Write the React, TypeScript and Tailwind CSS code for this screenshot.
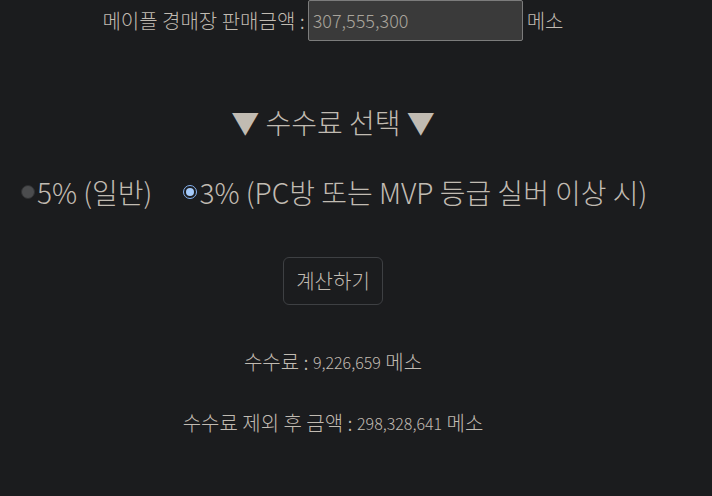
import React from "react";

const font = { fontFamily: '"Noto Sans CJK KR", "Noto Sans", sans-serif' };

export default function App() {
  return (
    <div className="w-[712px] h-[496px] bg-[#1b1c1e] text-[#c1bbb2] overflow-hidden" style={font}>
      <div className="w-[666px] flex flex-col">
        <div className="flex items-center justify-center h-[41px] text-[20px] font-light">
          <span>메이플 경매장 판매금액 :</span>
          <div className="ml-[3px] w-[215px] h-[41px] shrink-0 bg-[#3a3a3a] border border-[#7c7c7c] rounded-[2px] flex items-center pl-[4px] text-[18px] text-[#a9a49c]">
            307,555,300
          </div>
          <span className="ml-[4px]">메소</span>
        </div>
        <div className="mt-[61px] h-[40px] flex items-center justify-center text-[28px] font-light">
          ▼ 수수료 선택 ▼
        </div>
        <div className="mt-[30px] h-[40px] flex items-center pl-[21px] text-[28px] font-light w-[712px] whitespace-nowrap">
          <span className="shrink-0 w-[14px] h-[14px] rounded-full bg-[#4b4c4e] border border-[#2f3032] mr-[2px]" />
          <span>5% (일반)</span>
          <span className="shrink-0 ml-[31px] w-[14px] h-[14px] rounded-full border-[1.5px] border-[#86b3f2] bg-[#1b1c1e] flex items-center justify-center mr-[2px]">
            <span className="w-[8px] h-[8px] rounded-full bg-[#a6cbfb]" />
          </span>
          <span>3% (PC방 또는 MVP 등급 실버 이상 시)</span>
        </div>
        <div className="mt-[45px] flex justify-center">
          <div className="w-[100px] h-[48px] border border-[#3e4043] rounded-[6px] flex items-center justify-center text-[20px] font-light">
            계산하기
          </div>
        </div>
        <div className="mt-[43px] h-[28px] flex items-center justify-center text-[20px] font-light">
          <span>수수료 :&nbsp;</span>
          <span className="text-[16px]">9,226,659</span>
          <span>&nbsp;메소</span>
        </div>
        <div className="mt-[33px] h-[28px] flex items-center justify-center text-[20px] font-light">
          <span>수수료 제외 후 금액 :&nbsp;</span>
          <span className="text-[16px]">298,328,641</span>
          <span>&nbsp;메소</span>
        </div>
      </div>
    </div>
  );
}
